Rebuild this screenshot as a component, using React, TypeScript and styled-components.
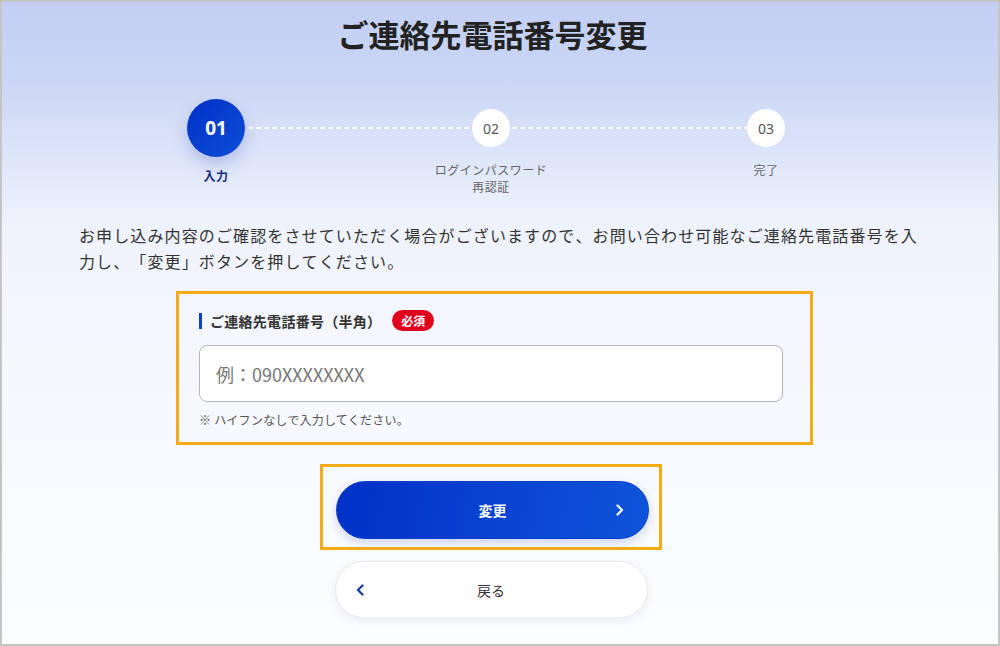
import styled, {createGlobalStyle} from "styled-components";

const GlobalStyle = createGlobalStyle`
  * {
    box-sizing: border-box;
  }
  body {
    margin: 0;
    font-family: "Noto Sans CJK JP", "Noto Sans", sans-serif;
    color: #333;
  }
`

const Frame = styled.div`
  width: 1000px;
  height: 646px;
  border: 2px solid #c5c5c5;
  overflow: hidden;
  background: linear-gradient(180deg, #c2cff3 0%, #cad6f4 12%, #dde5f9 24%, #eef2fc 34%, #f4f6fd 48%, #f9fafe 75%, #fcfdff 100%);
`

const Content = styled.main`
  display: flex;
  flex-direction: column;
  align-items: center;
  padding: 10px 18px 0 0;
`

const Title = styled.h1`
  margin: 0;
  font-size: 31px;
  line-height: 44px;
  font-weight: 700;
  color: #222;
  padding-left: 3px;
`

const Stepper = styled.ol`
  position: relative;
  display: grid;
  grid-template-columns: repeat(3, 275px);
  margin: 43px 0 0;
  padding: 0;
  list-style: none;

  &::before {
    content: "";
    position: absolute;
    top: 28px;
    left: 137px;
    right: 137px;
    height: 2px;
    background: repeating-linear-gradient(to right, #fff 0 5px, transparent 5px 8px);
  }
`

const Step = styled.li`
  display: flex;
  flex-direction: column;
  align-items: center;
  position: relative;
  z-index: 1;
`

const CircleSlot = styled.div`
  height: 58px;
  display: flex;
  align-items: center;
  justify-content: center;
`

const Circle = styled.div<{ $active?: boolean }>`
  display: flex;
  align-items: center;
  justify-content: center;
  border-radius: 50%;
  width: ${p => p.$active ? 58 : 38}px;
  height: ${p => p.$active ? 58 : 38}px;
  font-family: "Noto Sans", "Roboto", sans-serif;
  font-size: ${p => p.$active ? 19 : 14}px;
  font-weight: ${p => p.$active ? 700 : 400};
  color: ${p => p.$active ? "#fff" : "#555"};
  background: ${p => p.$active ? "linear-gradient(135deg, #0030c8, #0d4fd6)" : "#fff"};
  box-shadow: ${p => p.$active ? "0 8px 16px rgba(30, 60, 180, 0.22)" : "none"};
`

const StepLabel = styled.div<{ $active?: boolean }>`
  margin-top: ${p => p.$active ? 10 : 4}px;
  font-size: 12px;
  line-height: 17px;
  letter-spacing: 0.04em;
  text-align: center;
  font-weight: ${p => p.$active ? 700 : 400};
  color: ${p => p.$active ? "#1b2d7c" : "#666"};
`

const Lead = styled.p`
  width: 824px;
  margin: 27px 0 0;
  font-size: 16px;
  line-height: 26px;
  letter-spacing: 0.07em;
  color: #333;
  white-space: nowrap;
  text-spacing-trim: space-all;
  font-kerning: none;
  font-feature-settings: "chws" 0, "halt" 0, "palt" 0;
`

const Highlight = styled.div<{ $pad: string }>`
  border: 3px solid #f5aa18;
  padding: ${p => p.$pad};
`

const FormBox = styled(Highlight)`
  width: 637px;
  margin: 17px 0 0 7px;
`

const LabelRow = styled.div`
  display: flex;
  align-items: center;
  height: 21px;
  margin-bottom: 14px;
`

const Label = styled.label`
  display: flex;
  align-items: center;
  font-size: 14px;
  font-weight: 700;
  letter-spacing: 0.02em;
  color: #333;

  &::before {
    content: "";
    width: 3px;
    height: 16px;
    background: #0a40d0;
    margin-right: 8px;
  }
`

const Required = styled.span`
  margin-left: 11px;
  height: 21px;
  width: 42px;
  border-radius: 11px;
  background: #e0001e;
  color: #fff;
  font-size: 12px;
  font-weight: 700;
  display: flex;
  align-items: center;
  justify-content: center;
`

const Input = styled.input`
  display: block;
  width: 584px;
  height: 57px;
  border: 1px solid #b3b5c0;
  border-radius: 8px;
  background: #fff;
  padding: 0 16px;
  font-family: "Noto Sans CJK JP", "Noto Sans", sans-serif;
  font-size: 18px;
  color: #333;
  outline: none;

  &::placeholder {
    color: #777;
  }
`

const Note = styled.p`
  margin: 9px 0 0;
  font-size: 12px;
  line-height: 17px;
  letter-spacing: 0.02em;
  color: #555;
`

const ButtonBox = styled(Highlight)`
  width: 342px;
  margin-top: 19px;
`

const PillButton = styled.button<{ $primary?: boolean }>`
  position: relative;
  display: flex;
  align-items: center;
  justify-content: center;
  width: 313px;
  height: ${p => p.$primary ? 58 : 57}px;
  border-radius: 29px;
  font-family: "Noto Sans CJK JP", "Noto Sans", sans-serif;
  font-size: 14px;
  font-weight: ${p => p.$primary ? 700 : 400};
  color: ${p => p.$primary ? "#fff" : "#333"};
  background: ${p => p.$primary ? "linear-gradient(100deg, #0030c8 0%, #0a44d2 55%, #0f54d9 100%)" : "#fff"};
  border: 1px solid ${p => p.$primary ? "#0a3fcc" : "#ececf0"};
  box-shadow: ${p => p.$primary ? "0 4px 10px rgba(0, 40, 160, 0.18)" : "0 3px 10px rgba(40, 50, 90, 0.08)"};
  cursor: pointer;
  padding: 0;

  svg {
    position: absolute;
    top: 50%;
    transform: translateY(-50%);
  }
`

const NextIcon = styled.svg`
  right: 24px;
`

const BackIcon = styled.svg`
  left: 20px;
`

const BackButton = styled(PillButton)`
  margin-top: 11px;
`

export default function App() {
    return (
        <>
            <GlobalStyle/>
            <Frame>
                <Content>
                    <Title>ご連絡先電話番号変更</Title>
                    <Stepper>
                        <Step>
                            <CircleSlot><Circle $active>01</Circle></CircleSlot>
                            <StepLabel $active>入力</StepLabel>
                        </Step>
                        <Step>
                            <CircleSlot><Circle>02</Circle></CircleSlot>
                            <StepLabel>ログインパスワード<br/>再認証</StepLabel>
                        </Step>
                        <Step>
                            <CircleSlot><Circle>03</Circle></CircleSlot>
                            <StepLabel>完了</StepLabel>
                        </Step>
                    </Stepper>
                    <Lead>
                        お申し込み内容のご確認をさせていただく場合がございますので、お問い合わせ可能なご連絡先電話番号を入<br/>
                        力し、「変更」ボタンを押してください。
                    </Lead>
                    <FormBox $pad="16px 24px 14px 20px">
                        <LabelRow>
                            <Label htmlFor="tel">ご連絡先電話番号（半角）</Label>
                            <Required>必須</Required>
                        </LabelRow>
                        <Input id="tel" type="tel" placeholder="例：090XXXXXXXX"/>
                        <Note>※ ハイフンなしで入力してください。</Note>
                    </FormBox>
                    <ButtonBox $pad="14px 10px 8px 13px">
                        <PillButton $primary>
                            変更
                            <NextIcon width="8" height="12" viewBox="0 0 8 12">
                                <polyline points="1.5,1.5 6,6 1.5,10.5" fill="none" stroke="#fff" strokeWidth="2.2" strokeLinecap="round" strokeLinejoin="round"/>
                            </NextIcon>
                        </PillButton>
                    </ButtonBox>
                    <BackButton>
                        <BackIcon width="8" height="12" viewBox="0 0 8 12">
                            <polyline points="6.5,1.5 2,6 6.5,10.5" fill="none" stroke="#1437a8" strokeWidth="2.2" strokeLinecap="round" strokeLinejoin="round"/>
                        </BackIcon>
                        戻る
                    </BackButton>
                </Content>
            </Frame>
        </>
    )
}
